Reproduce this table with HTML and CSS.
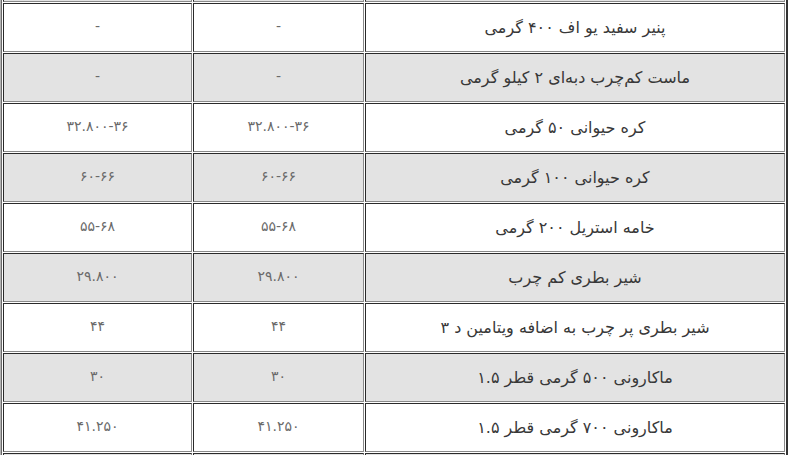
FILE: index.html
```html
<!DOCTYPE html>
<html lang="fa" dir="rtl">
<head>
<meta charset="utf-8">
<title>قیمت لبنیات</title>
<link rel="stylesheet" href="styles.css">
</head>
<body>
<div class="viewport">
  <div class="frame">
    <div class="price-table">
      <div class="cell name alt"></div><div class="cell alt"></div><div class="cell alt"></div>

      <div class="cell name">پنیر سفید یو اف ۴۰۰ گرمی</div><div class="cell num">-</div><div class="cell num">-</div>
      <div class="cell name alt">ماست کم‌چرب دبه‌ای ۲ کیلو گرمی</div><div class="cell num alt">-</div><div class="cell num alt">-</div>
      <div class="cell name">کره حیوانی ۵۰ گرمی</div><div class="cell num">۳۲.۸۰۰-۳۶</div><div class="cell num">۳۲.۸۰۰-۳۶</div>
      <div class="cell name alt">کره حیوانی ۱۰۰ گرمی</div><div class="cell num alt">۶۰-۶۶</div><div class="cell num alt">۶۰-۶۶</div>
      <div class="cell name">خامه استریل ۲۰۰ گرمی</div><div class="cell num">۵۵-۶۸</div><div class="cell num">۵۵-۶۸</div>
      <div class="cell name alt">شیر بطری کم چرب</div><div class="cell num alt">۲۹.۸۰۰</div><div class="cell num alt">۲۹.۸۰۰</div>
      <div class="cell name">شیر بطری پر چرب به اضافه ویتامین د ۳</div><div class="cell num">۴۴</div><div class="cell num">۴۴</div>
      <div class="cell name alt">ماکارونی ۵۰۰ گرمی قطر ۱.۵</div><div class="cell num alt">۳۰</div><div class="cell num alt">۳۰</div>
      <div class="cell name">ماکارونی ۷۰۰ گرمی قطر ۱.۵</div><div class="cell num">۴۱.۲۵۰</div><div class="cell num">۴۱.۲۵۰</div>

      <div class="cell name alt"></div><div class="cell alt"></div><div class="cell alt"></div>
    </div>
  </div>
</div>
</body>
</html>
```
FILE: styles.css
```css
html, body {
  margin: 0;
  padding: 0;
  background: #ffffff;
}

.viewport {
  width: 788px;
  height: 455px;
  overflow: hidden;
}

.frame {
  border-left: 1px solid #b4b4b4;
}

.price-table {
  direction: rtl;
  display: grid;
  grid-template-columns: 420px 171px 189px;
  grid-auto-rows: 49px;
  gap: 1px;
  padding: 0 1px;
  margin-top: -47px;
  border-left: 1px solid #6a6a6a;
  border-right: 2px solid #333333;
  background: #ffffff;
  font-family: "DejaVu Sans", "Noto Sans", sans-serif;
  font-size: 16px;
}

.cell {
  box-sizing: border-box;
  display: flex;
  align-items: center;
  justify-content: center;
  border-top: 1px solid #2a2a2a;
  border-left: 1px solid #2a2a2a;
  border-bottom: 1px solid #8a8a8a;
  border-right: 1px solid #8a8a8a;
  background: #ffffff;
  color: #555555;
  padding-bottom: 1px;
}

.cell.name {
  color: #383838;
}

.cell.num {
  color: #6a6a6a;
  font-size: 14px;
  padding-bottom: 3px;
}

.cell.alt {
  background: #e3e3e3;
}
```
